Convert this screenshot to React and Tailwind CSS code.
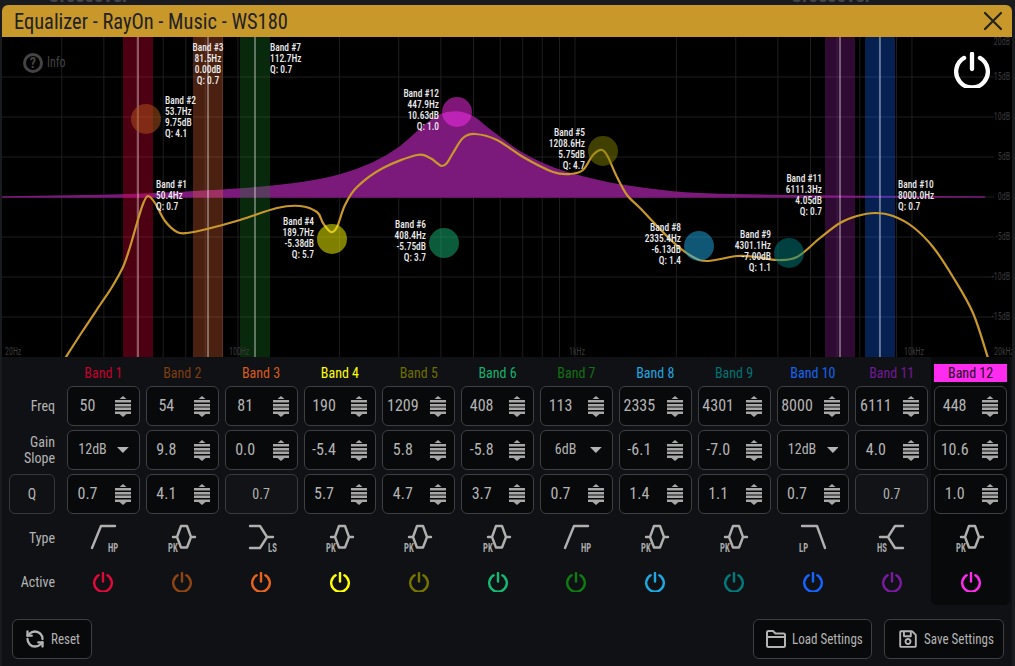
import React from "react";
import { RefreshCcw } from "lucide-react";
import { FaRegSave } from "react-icons/fa";

const W = 1010;
const H = 320;
const px = (f) => 0.4 + 337 * Math.log10(f / 20);
const py = (y) => y - 37;

const smooth = (pts) => {
  let d = `M${pts[0][0]} ${py(pts[0][1])}`;
  for (let i = 0; i < pts.length - 1; i++) {
    const p0 = pts[i - 1] || pts[i];
    const p1 = pts[i];
    const p2 = pts[i + 1];
    const p3 = pts[i + 2] || p2;
    const c1 = [p1[0] + (p2[0] - p0[0]) / 6, py(p1[1] + (p2[1] - p0[1]) / 6)];
    const c2 = [p2[0] - (p3[0] - p1[0]) / 6, py(p2[1] - (p3[1] - p1[1]) / 6)];
    d += ` C${c1[0]} ${c1[1]} ${c2[0]} ${c2[1]} ${p2[0]} ${py(p2[1])}`;
  }
  return d;
};

const curve = [
  [64, 360], [82, 332], [100, 305], [112, 287], [123, 267], [130, 247], [137, 223], [143, 204], [148, 196], [155, 203], [165, 221], [177, 232], [187, 233], [207, 229],
  [240, 220], [277, 208], [300, 206], [317, 212], [323, 223], [331, 232], [337, 227], [345, 205], [357, 187], [383, 168], [417, 155],
  [430, 158], [437, 163], [442, 166], [447, 163], [453, 153], [463, 138], [475, 134], [497, 140], [523, 157], [553, 172], [570, 174],
  [583, 170], [593, 155], [602, 150], [608, 157], [616, 175], [627, 195], [640, 208], [673, 242], [693, 257], [708, 261], [737, 256],
  [757, 257], [777, 260], [797, 257], [820, 238], [840, 223], [857, 216], [875, 213], [893, 216], [913, 227],
  [933, 247], [953, 277], [973, 313], [988, 358],
];

const hump = [
  [2, 197], [100, 195.5], [150, 194], [240, 189], [300, 183], [340, 175], [373, 163], [400, 147], [423, 127],
  [440, 115], [457, 112], [473, 117], [490, 130], [520, 152], [553, 168], [587, 178], [620, 185], [673, 192],
  [707, 194], [773, 195.5], [873, 196.5], [985, 197],
];

const bandRects = [
  { x: 123, fill: "rgba(240,0,56,0.32)" },
  { x: 193, fill: "rgba(231,100,50,0.32)" },
  { x: 240, fill: "rgba(25,128,38,0.32)" },
  { x: 825, fill: "rgba(147,31,160,0.32)" },
  { x: 865, fill: "rgba(20,100,255,0.32)" },
];

const dots = [
  { x: 146, y: 119, c: "#b5551a" },
  { x: 332, y: 239, c: "#ffff00" },
  { x: 603, y: 151, c: "#808000" },
  { x: 444, y: 243, c: "#14b873" },
  { x: 457, y: 112, c: "#ff2cf0" },
  { x: 699, y: 246, c: "#1eaee8" },
  { x: 789, y: 253, c: "#008080" },
];

const tags = [
  { x: 156, y: 188, a: "start", t: ["Band #1", "50.4Hz", "Q: 0.7"] },
  { x: 165, y: 104, a: "start", t: ["Band #2", "53.7Hz", "9.75dB", "Q: 4.1"] },
  { x: 208, y: 51, a: "middle", t: ["Band #3", "81.5Hz", "0.00dB", "Q: 0.7"] },
  { x: 314, y: 225, a: "end", t: ["Band #4", "189.7Hz", "-5.38dB", "Q: 5.7"] },
  { x: 585, y: 136, a: "end", t: ["Band #5", "1208.6Hz", "5.75dB", "Q: 4.7"] },
  { x: 426, y: 228, a: "end", t: ["Band #6", "408.4Hz", "-5.75dB", "Q: 3.7"] },
  { x: 270, y: 51, a: "start", t: ["Band #7", "112.7Hz", "Q: 0.7"] },
  { x: 681, y: 231, a: "end", t: ["Band #8", "2335.4Hz", "-6.13dB", "Q: 1.4"] },
  { x: 771, y: 238, a: "end", t: ["Band #9", "4301.1Hz", "-7.00dB", "Q: 1.1"] },
  { x: 898, y: 188, a: "start", t: ["Band #10", "8000.0Hz", "Q: 0.7"] },
  { x: 822, y: 182, a: "end", t: ["Band #11", "6111.3Hz", "4.05dB", "Q: 0.7"] },
  { x: 439, y: 97, a: "end", t: ["Band #12", "447.9Hz", "10.63dB", "Q: 1.0"] },
];

const freqLines = [30, 40, 50, 60, 70, 80, 90, 100, 200, 300, 400, 500, 600, 700, 800, 900, 1000, 2000, 3000, 4000, 5000, 6000, 7000, 8000, 9000, 10000];
const dbLines = [
  { y: 77, l: "15dB" }, { y: 117, l: "10dB" }, { y: 157, l: "5dB" }, { y: 197, l: "0dB" },
  { y: 237, l: "-5dB" }, { y: 277, l: "-10dB" }, { y: 317, l: "-15dB" },
];
const freqTags = [
  { x: 3, l: "20Hz" }, { x: 227, l: "100Hz" }, { x: 567, l: "1kHz" }, { x: 902, l: "10kHz" }, { x: 992, l: "20kHz" },
];

const bands = [
  { name: "Band 1", color: "#e00a3a", text: "#c4002e", freq: "50", gain: "12dB", gainSel: true, q: "0.7", type: "HP" },
  { name: "Band 2", color: "#8f4513", text: "#7e3d12", freq: "54", gain: "9.8", q: "4.1", type: "PK" },
  { name: "Band 3", color: "#e8641e", text: "#d85c1c", freq: "81", gain: "0.0", q: "0.7", qOff: true, type: "LS" },
  { name: "Band 4", color: "#ffff00", text: "#ffff00", freq: "190", gain: "-5.4", q: "5.7", type: "PK" },
  { name: "Band 5", color: "#757500", text: "#6e6e00", freq: "1209", gain: "5.8", q: "4.7", type: "PK" },
  { name: "Band 6", color: "#14b873", text: "#14b06e", freq: "408", gain: "-5.8", q: "3.7", type: "PK" },
  { name: "Band 7", color: "#117a11", text: "#137013", freq: "113", gain: "6dB", gainSel: true, q: "0.7", type: "HP" },
  { name: "Band 8", color: "#1ea7e0", text: "#1ea7e0", freq: "2335", gain: "-6.1", q: "1.4", type: "PK" },
  { name: "Band 9", color: "#007a7a", text: "#007272", freq: "4301", gain: "-7.0", q: "1.1", type: "PK" },
  { name: "Band 10", color: "#1464ff", text: "#1464f0", freq: "8000", gain: "12dB", gainSel: true, q: "0.7", type: "LP" },
  { name: "Band 11", color: "#7a1aa0", text: "#701a94", freq: "6111", gain: "4.0", q: "0.7", qOff: true, type: "HS" },
  { name: "Band 12", color: "#ff2cf0", text: "#1a0a1a", freq: "448", gain: "10.6", q: "1.0", type: "PK", selected: true },
];

const typeIcons = {
  HP: { d: "M25 30L34 8H48", lx: 41 },
  PK: { d: "M27 19H31L35 8H41L45 19H49M31 19L35 29.500H41L45 19", lx: 22 },
  LS: { d: "M25 8H35L42 19H48M42 19L35 30H25", lx: 43 },
  LP: { d: "M25 8H40L48 30", lx: 22 },
  HS: { d: "M48 8H40L33 19H25M33 19L40 30H48", lx: 22 },
};

const Stepper = () => (
  <svg width="16" height="21" viewBox="0 0 16 21" className="shrink-0" fill="#a8a8a8">
    <path d="M4.500 3L8 0L11.500 3Z" />
    <rect x="0" y="4" width="16" height="2.500" />
    <rect x="0" y="8" width="16" height="2.500" />
    <rect x="0" y="11.500" width="16" height="2.500" />
    <rect x="0" y="15.500" width="16" height="2.500" />
    <path d="M4.500 18L8 21L11.500 18Z" />
  </svg>
);

const Power = ({ color, size = 20, sw = 2.4 }) => (
  <svg width={size} height={size} viewBox="0 0 20 20" fill="none" stroke={color} strokeWidth={sw} strokeLinecap="round">
    <path d="M5.600 3.300A8.800 8.800 0 1 0 14.400 3.300" />
    <path d="M10 1V9.500" />
  </svg>
);

const ValueBox = ({ value }) => (
  <div className="h-10 border border-[#3e3f42] rounded-md bg-[#08090b] flex items-center justify-between pr-2">
    <span className="w-[39px] text-center text-[16px] text-[#b4b4b4]">{value}</span>
    <Stepper />
  </div>
);

const SelectBox = ({ value }) => (
  <div className="h-10 border border-[#3e3f42] rounded-md bg-[#08090b] flex items-center justify-between pr-[10px]">
    <span className="w-[50px] text-center text-[14px] text-[#b4b4b4] -mt-[2px]">{value}</span>
    <svg width="12" height="6" viewBox="0 0 12 6" fill="#b4b4b4"><path d="M0 0H12L6 6Z" /></svg>
  </div>
);

const Column = ({ band }) => {
  const icon = typeIcons[band.type];
  return (
    <div className={`px-[3px] pt-[7px] h-[248px] rounded-b-md ${band.selected ? "bg-[#08090b]" : ""}`}>
      {band.selected ? (
        <div className="h-[18px] mb-1 bg-[#ff2cf0] flex items-center justify-center text-[14px]" style={{ color: band.text }}>
          {band.name}
        </div>
      ) : (
        <div className="h-[18px] mb-1 flex items-center justify-center text-[14px]" style={{ color: band.text }}>
          {band.name}
        </div>
      )}
      <div className="flex flex-col gap-1">
        <ValueBox value={band.freq} />
        {band.gainSel ? <SelectBox value={band.gain} /> : <ValueBox value={band.gain} />}
        {band.qOff ? (
          <div className="h-10 border border-[#3a3b3e] rounded-md bg-[#121316] flex items-center justify-center text-[14px] text-[#b0b0b0]">
            {band.q}
          </div>
        ) : (
          <ValueBox value={band.q} />
        )}
      </div>
      <svg width="73" height="36" viewBox="0 0 73 36" className="block mt-1">
        <path d={icon.d} fill="none" stroke="#b0b0b0" strokeWidth="2.400" strokeLinecap="round" strokeLinejoin="round" />
        <text transform={`translate(${icon.lx} 34) scale(0.72 1)`} fontSize="12" fontWeight="700" fill="#a8a8a8">{band.type}</text>
      </svg>
      <div className="flex justify-center mt-[18px]">
        <Power color={band.color} />
      </div>
    </div>
  );
};

const Chart = () => (
  <svg width={W} height={H} viewBox={`0 0 ${W} ${H}`} className="block bg-black">
    {freqLines.map((f) => (
      <line key={f} x1={px(f)} x2={px(f)} y1="0" y2={H} stroke="#1e1e1e" />
    ))}
    {dbLines.map((l) => (
      <line key={l.y} x1="0" x2="992" y1={py(l.y)} y2={py(l.y)} stroke="#1e1e1e" />
    ))}
    <path d={`${smooth(hump)} Z`} fill="#7b1a7b" stroke="#7b1a7b" strokeWidth="1.500" transform="translate(-2 0)" />
    {bandRects.map((b) => (
      <g key={b.x}>
        <rect x={b.x - 2} y="0" width="30" height={H} fill={b.fill} />
        <line x1={b.x + 13} x2={b.x + 13} y1="0" y2={H} stroke="rgba(255,255,255,0.7)" />
      </g>
    ))}
    <path d={smooth(curve)} fill="none" stroke="#c8982a" strokeWidth="2.200" transform="translate(-2 0)" />
    {dots.map((d) => (
      <circle key={d.x} cx={d.x - 2} cy={py(d.y)} r="15" fill={d.c} fillOpacity="0.5" />
    ))}
    {tags.map((tag) => (
      <g key={tag.t[0]} transform={`translate(${tag.x - 2} 0) scale(0.82 1)`}>
        <text textAnchor={tag.a} fontSize="11.500" fontWeight="500" fill="#ececec">
          {tag.t.map((line, i) => (
            <tspan key={i} x="0" y={py(tag.y + i * 11)}>{line}</tspan>
          ))}
        </text>
      </g>
    ))}
    <text transform={`translate(1008 ${py(45)}) scale(0.8 1)`} textAnchor="end" fontSize="10" fill="#3a3a3a">20dB</text>
    {dbLines.map((l) => (
      <text key={l.l} transform={`translate(1008 ${py(l.y + 3)}) scale(0.8 1)`} textAnchor="end" fontSize="10" fill="#3a3a3a">{l.l}</text>
    ))}
    {freqTags.map((f) => (
      <text key={f.l} transform={`translate(${f.x} ${py(355)}) scale(0.8 1)`} fontSize="10" fill="#3a3a3a">{f.l}</text>
    ))}
    {/* info */}
    <circle cx="31" cy={py(63)} r="8.500" fill="none" stroke="#444" strokeWidth="3" />
    <text x="31" y={py(68)} textAnchor="middle" fontSize="14" fontWeight="700" fill="#444">?</text>
    <text transform={`translate(45 ${py(67)}) scale(0.85 1)`} fontSize="14" fill="#444">Info</text>
  </svg>
);

export default function App() {
  return (
    <div
      className="w-[1015px] h-[666px] bg-[#1a1b1e] overflow-hidden flex flex-col"
      style={{ fontFamily: '"Roboto Condensed","Liberation Sans Narrow",Roboto,sans-serif' }}
    >
      <div className="h-[5px] overflow-hidden flex text-[20px] font-bold text-[#44454a] leading-none">
        <span className="ml-[48px] -mt-[15px]">Crossover</span>
        <span className="ml-[662px] -mt-[15px]">Crossover</span>
      </div>
      <div className="ml-[2px] w-[1010px] flex-1 flex flex-col bg-[#101114] rounded-t-md overflow-hidden">
        <div className="h-8 bg-[#c8982a] flex items-center justify-between pl-3 pr-[9px] shrink-0">
          <span className="text-[22px] text-[#222] origin-left scale-x-[0.93] whitespace-nowrap">Equalizer - RayOn - Music - WS180</span>
          <svg width="20" height="20" viewBox="0 0 20 20" stroke="#222" strokeWidth="2.200" strokeLinecap="round">
            <path d="M2 2L18 18M18 2L2 18" />
          </svg>
        </div>
        <div className="relative shrink-0">
          <Chart />
          <div className="absolute left-[952px] top-[15px]">
            <Power color="#ffffff" size={36} sw={2.400} />
          </div>
        </div>
        <div className="flex shrink-0">
          <div className="w-[62px] shrink-0 flex flex-col items-end text-[14px] text-[#b4b4b4] pr-[9px]">
            <div className="h-10 mt-[29px] flex items-center">Freq</div>
            <div className="h-10 mt-1 flex items-center text-right leading-4">Gain<br />Slope</div>
            <div className="h-10 w-[46px] mt-1 border border-[#36373a] rounded-md flex items-center justify-center">Q</div>
            <div className="h-9 mt-1 pt-1 flex items-center">Type</div>
            <div className="h-5 mt-[18px] flex items-center">Active</div>
          </div>
          <div className="flex-1 grid grid-cols-12 pr-[2px]">
            {bands.map((b) => (
              <Column key={b.name} band={b} />
            ))}
          </div>
        </div>
        <div className="flex items-center mt-[14px] pl-[10px] pr-2 text-[15px] text-[#b4b4b4]">
          <button className="h-10 w-20 pl-3 border border-[#3e3f42] rounded-md bg-[#08090b] flex items-center gap-[6px]">
            <RefreshCcw size={20} strokeWidth={2.800} className="shrink-0" />
            <span className="origin-left scale-x-[0.87] whitespace-nowrap">Reset</span>
          </button>
          <button className="ml-auto h-10 w-[119px] pl-3 border border-[#3e3f42] rounded-md bg-[#08090b] flex items-center gap-[6px]">
            <svg width="20" height="18" viewBox="0 0 20 18" fill="none" stroke="#b4b4b4" strokeWidth="2" strokeLinejoin="round" className="shrink-0">
              <path d="M1 15.500V2.500A1.500 1.500 0 0 1 2.500 1H7L9.500 3.500H17.500A1.500 1.500 0 0 1 19 5V15.500A1.500 1.500 0 0 1 17.500 17H2.500A1.500 1.500 0 0 1 1 15.500Z" />
              <path d="M1 7H19" />
            </svg>
            <span className="origin-left scale-x-[0.87] whitespace-nowrap">Load Settings</span>
          </button>
          <button className="ml-3 h-10 w-[120px] pl-[13px] border border-[#3e3f42] rounded-md bg-[#08090b] flex items-center gap-[6px]">
            <FaRegSave size={20} className="shrink-0" />
            <span className="origin-left scale-x-[0.87] whitespace-nowrap">Save Settings</span>
          </button>
        </div>
      </div>
    </div>
  );
}
